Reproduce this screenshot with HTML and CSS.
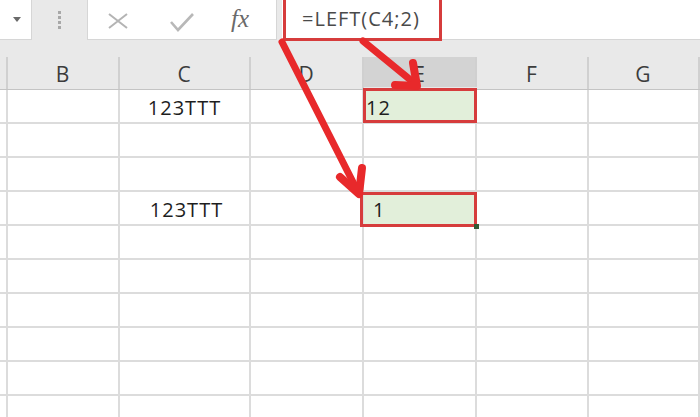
FILE: index.html
```html
<!DOCTYPE html>
<html>
<head>
<meta charset="utf-8">
<link rel="stylesheet" href="styles.css">
</head>
<body>
<div class="app">
  <div class="toolbar">
    <div class="name-box"><span class="caret"></span></div>
    <div class="grip"><i></i><i></i><i></i><i></i></div>
    <div class="fx-box">
      <svg class="icon-x" width="22" height="16" viewBox="0 0 22 16"><path d="M2 1 L20 15 M20 1 L2 15" fill="none" stroke="#b4b4b4" stroke-width="2"/></svg>
      <svg class="icon-check" width="26" height="20" viewBox="0 0 26 20"><path d="M2 10 L9 18 L24 2" fill="none" stroke="#b8b8b8" stroke-width="2.6"/></svg>
      <span class="fx">fx</span>
    </div>
    <div class="formula-input"><span class="formula-text">=LEFT(C4;2)</span></div>
  </div>

  <div class="col-headers">
    <div class="hcell"></div>
    <div class="hcell">B</div>
    <div class="hcell">C</div>
    <div class="hcell">D</div>
    <div class="hcell active">E</div>
    <div class="hcell">F</div>
    <div class="hcell">G</div>
  </div>

  <div class="sheet">
    <div class="cell"></div><div class="cell"></div><div class="cell center">123TTT</div><div class="cell"></div><div class="cell filled pad-a">12<span class="mark mark-a"></span></div><div class="cell"></div><div class="cell"></div>
    <div class="cell"></div><div class="cell"></div><div class="cell"></div><div class="cell"></div><div class="cell"></div><div class="cell"></div><div class="cell"></div>
    <div class="cell"></div><div class="cell"></div><div class="cell"></div><div class="cell"></div><div class="cell"></div><div class="cell"></div><div class="cell"></div>
    <div class="cell"></div><div class="cell"></div><div class="cell center shift">123TTT</div><div class="cell"></div><div class="cell filled pad-b">1<span class="mark mark-b"></span><span class="handle"></span></div><div class="cell"></div><div class="cell"></div>
    <div class="cell"></div><div class="cell"></div><div class="cell"></div><div class="cell"></div><div class="cell"></div><div class="cell"></div><div class="cell"></div>
    <div class="cell"></div><div class="cell"></div><div class="cell"></div><div class="cell"></div><div class="cell"></div><div class="cell"></div><div class="cell"></div>
    <div class="cell"></div><div class="cell"></div><div class="cell"></div><div class="cell"></div><div class="cell"></div><div class="cell"></div><div class="cell"></div>
    <div class="cell"></div><div class="cell"></div><div class="cell"></div><div class="cell"></div><div class="cell"></div><div class="cell"></div><div class="cell"></div>
    <div class="cell"></div><div class="cell"></div><div class="cell"></div><div class="cell"></div><div class="cell"></div><div class="cell"></div><div class="cell"></div>
    <div class="cell"></div><div class="cell"></div><div class="cell"></div><div class="cell"></div><div class="cell"></div><div class="cell"></div><div class="cell"></div>
  </div>

  <svg class="arrows" width="700" height="417" viewBox="0 0 700 417">
    <g fill="none" stroke="#e8292b" stroke-width="7" stroke-linecap="round" stroke-linejoin="round">
      <path d="M363 41 L413 82"/>
      <path d="M395 85 L417 86 L413 63" stroke-width="8"/>
      <path d="M282 42 L357 190"/>
      <path d="M340 177 L359 194 L362 168" stroke-width="8"/>
    </g>
  </svg>
</div>
</body>
</html>
```

FILE: styles.css
```css
* { box-sizing: border-box; }
html, body { margin: 0; padding: 0; background: #ffffff; }
body {
  width: 700px;
  height: 417px;
  overflow: hidden;
  font-family: "Open Sans", "Noto Sans", sans-serif;
}
.app { position: relative; width: 700px; height: 417px; overflow: hidden; }

.toolbar {
  display: flex;
  height: 40px;
  background: #e9e9e9;
}
.name-box {
  width: 32px;
  background: #ffffff;
  border-right: 1px solid #d6d6d6;
  border-bottom: 1px solid #d6d6d6;
  display: flex;
  align-items: center;
  justify-content: center;
}
.caret {
  width: 0; height: 0;
  border-left: 4px solid transparent;
  border-right: 4px solid transparent;
  border-top: 5px solid #6a6a6a;
  margin-left: 2px;
}
.grip {
  width: 55px;
  display: flex;
  flex-direction: column;
  align-items: center;
  justify-content: center;
  gap: 2px;
}
.grip i {
  display: block;
  width: 3px; height: 3px;
  background: #a8a8a8;
}
.fx-box {
  width: 190px;
  background: #ffffff;
  border: 1px solid #d6d6d6;
  border-top: none;
  position: relative;
  display: flex;
  align-items: center;
}
.icon-x { margin-left: 19px; margin-top: 2px; }
.icon-check { margin-left: 40px; margin-top: 4px; }
.fx {
  margin-left: 36px;
  font-family: "Liberation Serif", "DejaVu Serif", serif;
  font-style: italic;
  font-size: 25px;
  color: #6a6a6a;
  margin-top: -2px;
}
.formula-input {
  flex: 1;
  margin-left: 5px;
  background: #ffffff;
  border-bottom: 1px solid #d6d6d6;
}
.formula-text {
  display: inline-block;
  margin-left: 1px;
  height: 41px;
  width: 159px;
  border: 3px solid #d63c3c;
  border-top: none;
  padding: 9px 0 0 16px;
  font-size: 20px;
  line-height: 20px;
  letter-spacing: 1px;
  color: #4a4a4a;
}

.col-headers {
  display: grid;
  grid-template-columns: 8px 112px 131px 113px 113px 112px 1fr;
  height: 50px;
  padding-top: 17px;
  background: #e9e9e9;
  border-bottom: 1px solid #c4c4c4;
}
.hcell {
  border-right: 2px solid #d0d0d0;
  text-align: center;
  font-size: 21px;
  line-height: 21px;
  padding-top: 7px;
  color: #3c3c3c;
  letter-spacing: 1px;
}
.hcell.active {
  background: #d3d3d3;
  margin-bottom: 2px;
}

.sheet {
  display: grid;
  grid-template-columns: 8px 112px 131px 113px 113px 112px 1fr;
  grid-auto-rows: 34px;
}
.cell {
  position: relative;
  border-right: 2px solid #dcdcdc;
  border-bottom: 2px solid #dcdcdc;
  font-size: 20px;
  line-height: 20px;
  padding-top: 8px;
  color: #1e1e1e;
  letter-spacing: 1px;
  white-space: nowrap;
}
.center { text-align: center; }
.shift { padding-left: 4px; }
.filled { background: #e2efda; z-index: 1; }
.pad-a { padding-left: 2px; }
.pad-b { padding-left: 9px; }

.mark {
  position: absolute;
  border: 3px solid #d63c3c;
}
.mark-a { top: -2px; left: -1px; right: -2px; bottom: -1px; }
.mark-b { top: 0; left: -4px; right: -2px; bottom: -3px; }
.handle {
  position: absolute;
  right: -4px;
  bottom: -5px;
  width: 5px;
  height: 5px;
  background: #2f5a34;
}

.arrows {
  position: absolute;
  top: 0;
  left: 0;
  z-index: 2;
  pointer-events: none;
}
```
